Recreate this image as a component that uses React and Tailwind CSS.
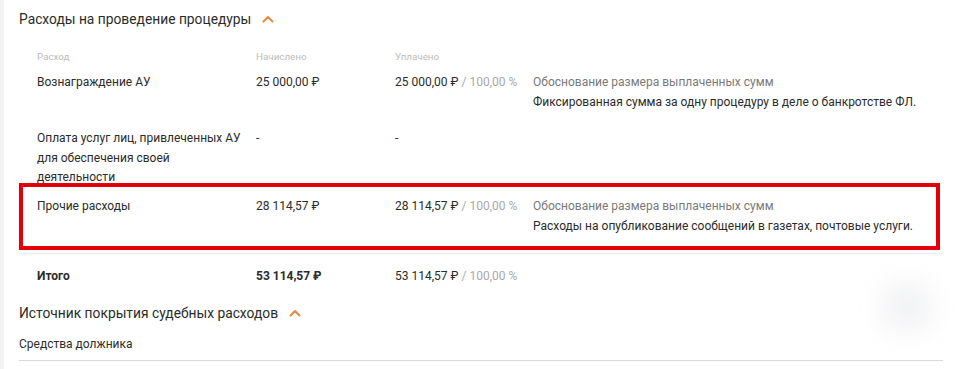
import React from "react";

const Chevron = () => (
  <svg width="12" height="8" viewBox="0 0 12 8" fill="none" className="shrink-0">
    <path d="M1.5 6.5L6 2L10.5 6.5" stroke="#e8893a" strokeWidth="2" strokeLinecap="round" strokeLinejoin="round" />
  </svg>
);

const rows = [
  {
    name: "Вознаграждение АУ",
    accrued: "25 000,00 ₽",
    paid: "25 000,00 ₽",
    percent: "100,00 %",
    note: "Фиксированная сумма за одну процедуру в деле о банкротстве ФЛ.",
    h: "h-[56px]",
  },
  {
    name: "Оплата услуг лиц, привлеченных АУ для обеспечения своей деятельности",
    accrued: "-",
    paid: "-",
    h: "h-[68px]",
  },
  {
    name: "Прочие расходы",
    accrued: "28 114,57 ₽",
    paid: "28 114,57 ₽",
    percent: "100,00 %",
    note: "Расходы на опубликование сообщений в газетах, почтовые услуги.",
    h: "h-[69px]",
    marked: true,
  },
];

const Row = ({ row }) => (
  <div className={`relative flex ${row.h} text-[12px] leading-[19.5px] text-[#2b2b2b]`}>
    <div className="w-[219px] pr-2">{row.name}</div>
    <div className="w-[139px]">{row.accrued}</div>
    <div className="w-[138px]">
      {row.paid}
      {row.percent && <span className="text-[#a9a9a9]"> / {row.percent}</span>}
    </div>
    {row.note && (
      <div className="flex-1">
        <div className="text-[#7a7a7a]">Обоснование размера выплаченных сумм</div>
        <div>{row.note}</div>
      </div>
    )}
    {row.marked && (
      <>
        <div className="absolute left-[-18px] right-0 bottom-[12px] h-px bg-[#ececec]" />
        <div className="absolute top-[-14px] left-[-18px] right-[3px] bottom-[16px] border-4 border-[#e3000b]" />
      </>
    )}
  </div>
);

export default function App() {
  return (
    <div className="relative h-[369px] bg-white border-l-[4px] border-[#f3f3f3] pl-[15px] pr-[17px] pt-[9px] font-['Roboto',sans-serif]">
      <div className="flex items-center gap-[11px] h-[20px] text-[13.8px] text-[#2b2b2b]">
        <span>Расходы на проведение процедуры</span>
        <Chevron />
      </div>

      <div className="ml-[18px] mt-[20px] flex h-[16px] items-center text-[9.8px] text-[#bcbcbc]">
        <div className="w-[219px]">Расход</div>
        <div className="w-[139px]">Начислено</div>
        <div className="w-[138px]">Уплачено</div>
      </div>

      <div className="ml-[18px] mt-[8px]">
        {rows.map((row, i) => (
          <Row key={i} row={row} />
        ))}
        <div className="flex h-[20px] items-center text-[12px] text-[#2b2b2b]">
          <div className="w-[219px] font-bold">Итого</div>
          <div className="w-[139px] font-bold">53 114,57 ₽</div>
          <div className="w-[138px]">
            53 114,57 ₽<span className="text-[#a9a9a9]"> / 100,00 %</span>
          </div>
        </div>
      </div>

      <div className="mt-[17px] flex items-center gap-[11px] h-[20px] text-[13.8px] text-[#2b2b2b]">
        <span>Источник покрытия судебных расходов</span>
        <Chevron />
      </div>

      <div className="mt-[11px] h-[27px] border-b border-[#d9d9d9] text-[12px] leading-[20px] text-[#2b2b2b]">
        Средства должника
      </div>

      <div className="absolute left-[878px] top-[282px] h-[50px] w-[50px] rounded-md bg-[#e8e9ec] blur-[12px] opacity-50" />
    </div>
  );
}
